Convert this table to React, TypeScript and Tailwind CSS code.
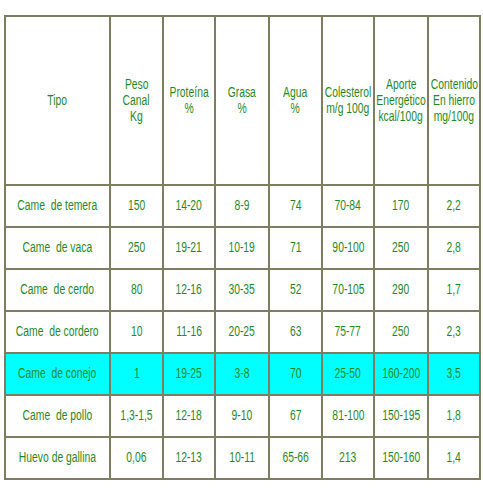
const header = [
  ["Tipo"],
  ["Peso", "Canal", "Kg"],
  ["Proteína", "%"],
  ["Grasa", "%"],
  ["Agua", "%"],
  ["Colesterol", "m/g 100g"],
  ["Aporte", "Energético", "kcal/100g"],
  ["Contenido", "En hierro", "mg/100g"],
];

const rows = [
  ["Came\u00a0 de temera", "150", "14-20", "8-9", "74", "70-84", "170", "2,2"],
  ["Came\u00a0 de vaca", "250", "19-21", "10-19", "71", "90-100", "250", "2,8"],
  ["Came\u00a0 de cerdo", "80", "12-16", "30-35", "52", "70-105", "290", "1,7"],
  ["Came\u00a0 de cordero", "10", "11-16", "20-25", "63", "75-77", "250", "2,3"],
  ["Came\u00a0 de conejo", "1", "19-25", "3-8", "70", "25-50", "160-200", "3,5"],
  ["Came\u00a0 de pollo", "1,3-1,5", "12-18", "9-10", "67", "81-100", "150-195", "1,8"],
  ["Huevo de gallina", "0,06", "12-13", "10-11", "65-66", "213", "150-160", "1,4"],
];

const widths = ["w-[105px]", "w-[53px]", "w-[52px]", "w-[54px]", "w-[53px]", "w-[52px]", "w-[54px]", "w-[52px]"];

// narrow text: Arial Narrow isn't installed, so squeeze Liberation Sans
function Narrow({ text }: { text: string }) {
  return (
    <div className="flex justify-center">
      <span className="inline-block shrink-0 whitespace-pre scale-x-[0.75]">{text}</span>
    </div>
  );
}

export default function App() {
  return (
    <div className="w-[483px] h-[494px] bg-white pt-[15px] pl-[4px]">
      <table
        className="table-fixed border-collapse w-[477px] text-[13.8px] leading-[16px] text-[#1f8a1f] text-center"
        style={{ fontFamily: '"Liberation Sans", Arial, sans-serif' }}
      >
        <colgroup>
          {widths.map((w, i) => (
            <col key={i} className={w} />
          ))}
        </colgroup>
        <thead>
          <tr className="h-[169px]">
            {header.map((lines, i) => (
              <th key={i} className="border-2 border-[#7d7d5f] font-normal align-middle px-0">
                {lines.map((l, j) => (
                  <Narrow key={j} text={l} />
                ))}
              </th>
            ))}
          </tr>
        </thead>
        <tbody>
          {rows.map((r, i) => (
            <tr key={i} className={`h-[42px] ${i === 4 ? "bg-[#00ffff]" : ""}`}>
              {r.map((c, j) => (
                <td key={j} className="border-2 border-[#7d7d5f] px-0">
                  <Narrow text={c} />
                </td>
              ))}
            </tr>
          ))}
        </tbody>
      </table>
    </div>
  );
}
